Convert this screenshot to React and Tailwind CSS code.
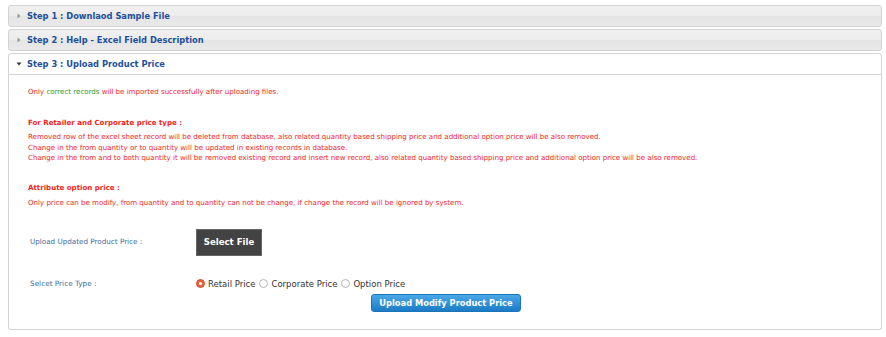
import React from "react";

const font = { fontFamily: '"DejaVu Sans", Verdana, sans-serif' };

function Arrow({ open }) {
  return open ? (
    <svg width="6" height="6" viewBox="0 0 6 6" className="shrink-0">
      <path d="M0.5 1.5 L5.5 1.5 L3 4.5 Z" fill="#333" />
    </svg>
  ) : (
    <svg width="6" height="6" viewBox="0 0 6 6" className="shrink-0">
      <path d="M1.5 0.5 L4.5 3 L1.5 5.5 Z" fill="#999" />
    </svg>
  );
}

function Header({ title, open }) {
  return (
    <div
      className={
        "h-[22px] flex items-center gap-[5px] pl-[7px] border border-[#d3d3d3] " +
        (open
          ? "bg-white rounded-t-[3px]"
          : "rounded-[3px] bg-[linear-gradient(#f0f0f0_0%,#ececec_50%,#e4e4e4_50%,#e9e9e9_100%)]")
      }
    >
      <Arrow open={open} />
      <span className="text-[8.3px] font-bold text-[#1d4f9a] leading-none">{title}</span>
    </div>
  );
}

function Radio({ checked, label }) {
  return (
    <label className="flex items-center gap-[3px]">
      {checked ? (
        <span className="w-[9px] h-[9px] rounded-full bg-[#e8643c] border border-[#d0573a] flex items-center justify-center">
          <span className="w-[3px] h-[3px] rounded-full bg-white"></span>
        </span>
      ) : (
        <span className="w-[9px] h-[9px] rounded-full bg-white border border-[#b5b5b5]"></span>
      )}
      <span className="text-[8.5px] text-[#333]">{label}</span>
    </label>
  );
}

export default function App() {
  return (
    <div className="bg-white w-[886px] h-[337px] pt-[5px] pl-[8px] pr-[4px]" style={font}>
      <div className="flex flex-col gap-[2px]">
        <Header title="Step 1 : Downlaod Sample File" />
        <Header title="Step 2 : Help - Excel Field Description" />
        <div>
          <Header title="Step 3 : Upload Product Price" open />
          <div className="h-[255px] border border-t-0 border-[#d3d3d3] rounded-b-[3px] pl-[19px] pt-[12px] text-[7.05px] leading-[10.5px]">
            <p className="text-[#f21d1d]">
              Only <span className="text-[#2f9a2f]">correct records</span> will be imported successfully after uploading files.
            </p>
            <p className="text-[#f21d1d] font-bold mt-[20px]">For Retailer and Corporate price type :</p>
            <p className="text-[#f21d1d] mt-[4px]">
              Removed row of the excel sheet record will be deleted from database, also related quantity based shipping price and additional option price will be also removed.
              <br />
              Change in the from quantity or to quantity will be updated in existing records in database.
              <br />
              Change in the from and to both quantity it will be removed existing record and insert new record, also related quantity based shipping price and additional option price will be also removed.
            </p>
            <p className="text-[#f21d1d] font-bold mt-[19px]">Attribute option price :</p>
            <p className="text-[#f21d1d] mt-[5px]">
              Only price can be modify, from quantity and to quantity can not be change, if change the record will be ignored by system.
            </p>
            <div className="flex items-center mt-[20px]">
              <span className="w-[168px] pl-[2px] text-[#3c6e9e] text-[7.2px]">Upload Updated Product Price :</span>
              <button className="h-[27px] w-[66px] bg-[#434343] border border-[#666] text-white font-bold text-[8.6px] leading-none">
                Select File
              </button>
            </div>
            <div className="flex items-center mt-[23px]">
              <span className="w-[168px] pl-[2px] text-[#3c6e9e] text-[7.3px]">Selcet Price Type :</span>
              <div className="flex items-center gap-[4px]">
                <Radio checked label="Retail Price" />
                <Radio label="Corporate Price" />
                <Radio label="Option Price" />
              </div>
            </div>
            <div className="flex mt-[5px] pl-[343px]">
              <button className="h-[18px] w-[150px] rounded-[3px] bg-[linear-gradient(#4aa8e6,#1b7bc6)] border border-[#1a74b8] text-white font-bold text-[8.3px] leading-none">
                Upload Modify Product Price
              </button>
            </div>
          </div>
        </div>
      </div>
    </div>
  );
}
